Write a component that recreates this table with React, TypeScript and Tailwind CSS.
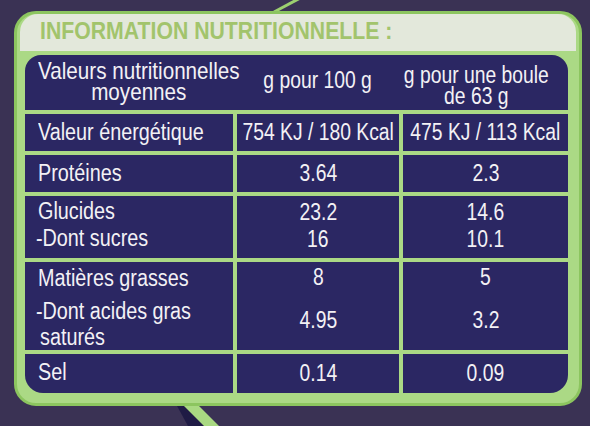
import React from "react";

const cell = "bg-[#2b2763]";

function L({ children }: { children: React.ReactNode }) {
  return <span className="inline-block whitespace-nowrap origin-left scale-x-[0.86]">{children}</span>;
}
function C({ children }: { children: React.ReactNode }) {
  return <span className="inline-block whitespace-nowrap origin-center scale-x-[0.84]">{children}</span>;
}

export default function App() {
  return (
    <div className="relative w-[590px] h-[426px] overflow-hidden bg-[#3a3254] text-[#f3f1f5] font-[Liberation_Sans,Arial,sans-serif] text-[23px] leading-[23px]">
      <svg className="absolute left-0 top-0" width="590" height="426" viewBox="0 0 590 426">
        <line x1="274" y1="12" x2="304" y2="-4" stroke="#9ccf70" strokeWidth="3" />
        <polygon points="176,404 190,404 206,426 188,426" fill="#1f1b45" />
        <polygon points="182,404 197,404 219,426 204,426" fill="#a9d982" />
      </svg>
      <div className="absolute left-[14px] top-[11px] w-[568px] h-[395px] rounded-[22px] bg-[#abd985] border-[3px] border-[#8cc55f] flex flex-col">
        <div className="mx-[3px] h-[37px] rounded-t-[18px] bg-[#e3e8db] pl-[20px] pt-[5px]">
          <span className="inline-block origin-left scale-x-[0.885] font-bold text-[24px] leading-[24px] text-[#a2c46c] whitespace-nowrap">
            INFORMATION NUTRITIONNELLE :
          </span>
        </div>
        <div className="ml-[8px] mr-[11px] mt-[4px] h-[338px] flex flex-col gap-[4px]">
          {/* header */}
          <div className={`${cell} h-[55px] rounded-t-[16px] grid grid-cols-[208px_162px_165px] gap-x-[4px]`}>
            <div className="pl-[13px] pt-[5px] whitespace-nowrap">
              <div className="inline-block origin-left scale-x-[0.86] text-center leading-[21px] text-[24px]">
                Valeurs nutritionnelles
                <br />
                moyennes
              </div>
            </div>
            <div className="pt-[14px] flex justify-center">
              <C>g pour 100 g</C>
            </div>
            <div className="pt-[10px] pr-[19px] flex justify-center">
              <div className="inline-block origin-center scale-x-[0.84] leading-[21px] whitespace-nowrap text-center">
                g pour une boule
                <br />
                de 63 g
              </div>
            </div>
          </div>
          {/* energie */}
          <div className="h-[37px] grid grid-cols-[208px_162px_165px] gap-x-[4px]">
            <div className={`${cell} flex items-center pl-[13px]`}><L>Valeur énergétique</L></div>
            <div className={`${cell} flex items-center justify-center`}><C>754 KJ / 180 Kcal</C></div>
            <div className={`${cell} flex items-center justify-center`}><C>475 KJ / 113 Kcal</C></div>
          </div>
          {/* proteines */}
          <div className="h-[37px] grid grid-cols-[208px_162px_165px] gap-x-[4px]">
            <div className={`${cell} flex items-center pl-[13px]`}><L>Protéines</L></div>
            <div className={`${cell} flex items-center justify-center`}><C>3.64</C></div>
            <div className={`${cell} flex items-center justify-center`}><C>2.3</C></div>
          </div>
          {/* glucides */}
          <div className="h-[62px] grid grid-cols-[208px_162px_165px] gap-x-[4px] leading-[27px]">
            <div className={`${cell} pl-[13px] pt-[2px]`}>
              <div><L>Glucides</L></div>
              <div className="-ml-[2px]"><L>-Dont sucres</L></div>
            </div>
            <div className={`${cell} pt-[3px] text-center`}>
              <div><C>23.2</C></div>
              <div><C>16</C></div>
            </div>
            <div className={`${cell} pt-[3px] text-center`}>
              <div><C>14.6</C></div>
              <div><C>10.1</C></div>
            </div>
          </div>
          {/* matieres grasses */}
          <div className="h-[88px] grid grid-cols-[208px_162px_165px] gap-x-[4px]">
            <div className={`${cell} pl-[13px] pt-[3px] leading-[26px]`}>
              <div><L>Matières grasses</L></div>
              <div className="mt-[7px] -ml-[2px]"><L>-Dont acides gras</L></div>
              <div className="pl-[2px]"><L>saturés</L></div>
            </div>
            <div className={`${cell} pt-[4px] text-center`}>
              <div><C>8</C></div>
              <div className="mt-[20px]"><C>4.95</C></div>
            </div>
            <div className={`${cell} pt-[4px] text-center`}>
              <div><C>5</C></div>
              <div className="mt-[20px]"><C>3.2</C></div>
            </div>
          </div>
          {/* sel */}
          <div className="h-[39px] grid grid-cols-[208px_162px_165px] gap-x-[4px]">
            <div className={`${cell} rounded-bl-[18px] flex items-center pl-[13px] pb-[2px]`}><L>Sel</L></div>
            <div className={`${cell} flex items-center justify-center`}><C>0.14</C></div>
            <div className={`${cell} rounded-br-[18px] flex items-center justify-center`}><C>0.09</C></div>
          </div>
        </div>
      </div>
    </div>
  );
}
